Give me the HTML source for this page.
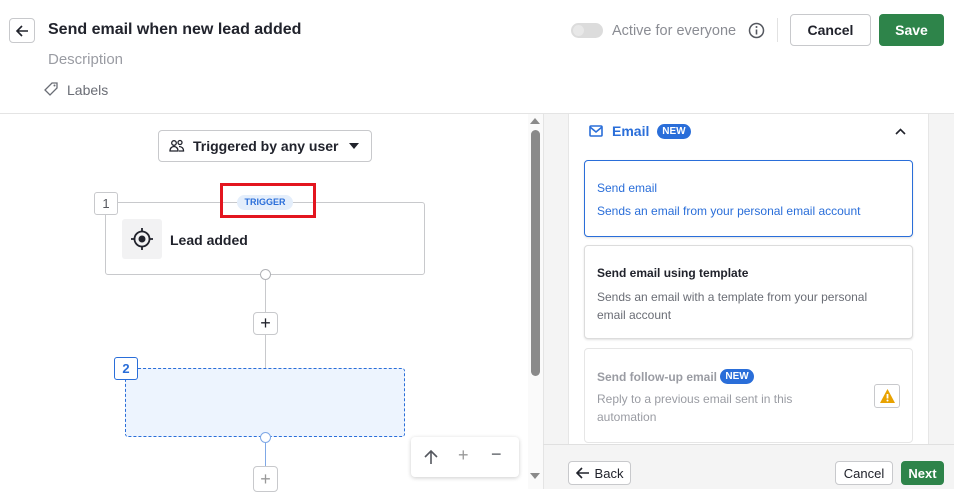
<!DOCTYPE html>
<html><head><style>
*{box-sizing:border-box;margin:0;padding:0}
body{width:954px;height:489px;overflow:hidden;background:#fff;font-family:"Liberation Sans",sans-serif;color:#21232c;position:relative}
.a{position:absolute}
.btn{position:absolute;border:1px solid #c8c9cc;border-radius:4px;background:#fff;display:flex;align-items:center;justify-content:center;font-weight:bold}
.card{position:absolute;left:584px;width:329px;background:#fff;border:1px solid #dcdcdc;border-radius:4px;box-shadow:0 1px 2px rgba(0,0,0,.12)}
.new{display:inline-block;background:#2a6ed9;color:#fff;font-size:10px;font-weight:bold;border-radius:9px;padding:2px 5px;vertical-align:2px}
</style></head><body>
<div class="btn" style="left:9px;top:18px;width:26px;height:25px;font-weight:normal">
<svg width="14" height="14" viewBox="0 0 14 14"><path d="M13 7H2M7 2L2 7l5 5" stroke="#21232c" stroke-width="1.6" fill="none"/></svg></div>
<div class="a" style="left:48px;top:21px;font-size:16px;font-weight:bold">Send email when new lead added</div>
<div class="a" style="left:48px;top:51px;font-size:15px;color:#9a9ca3">Description</div>
<svg class="a" style="left:43px;top:81px" width="16" height="16" viewBox="0 0 16 16"><path d="M9 2h5v5l-7 7-5-5z" stroke="#6a6d75" stroke-width="1.3" fill="none"/><circle cx="11.5" cy="4.5" r="1" fill="#6a6d75"/></svg>
<div class="a" style="left:67px;top:82px;font-size:14px;color:#6a6d75">Labels</div>
<div class="a" style="left:571px;top:23px;width:32px;height:15px;border-radius:8px;background:#dcdcdc"></div>
<div class="a" style="left:573px;top:25px;width:11px;height:11px;border-radius:6px;background:#e8e8e8"></div>
<div class="a" style="left:612px;top:23px;font-size:14.5px;color:#8a8c93">Active for everyone</div>
<svg class="a" style="left:748px;top:22px" width="17" height="17" viewBox="0 0 17 17"><circle cx="8.5" cy="8.5" r="7" stroke="#55585f" stroke-width="1.5" fill="none"/><path d="M8.5 7.5v5" stroke="#55585f" stroke-width="1.6"/><circle cx="8.5" cy="5" r="1" fill="#55585f"/></svg>
<div class="a" style="left:777px;top:18px;width:1px;height:24px;background:#e2e2e2"></div>
<div class="btn" style="left:790px;top:14px;width:81px;height:32px;font-size:14px">Cancel</div>
<div class="btn" style="left:879px;top:14px;width:65px;height:32px;font-size:14px;background:#2e844a;border-color:#2e844a;color:#fff">Save</div>
<div class="a" style="left:0;top:113px;width:954px;height:1px;background:#e4e4e4"></div>
<div class="btn" style="left:158px;top:130px;width:214px;height:32px;font-size:14px;justify-content:flex-start;padding-left:10px">
<svg width="16" height="14" viewBox="0 0 16 14" style="margin-right:8px"><circle cx="5" cy="4" r="2.3" stroke="#21232c" stroke-width="1.3" fill="none"/><circle cx="11" cy="3.5" r="2" stroke="#21232c" stroke-width="1.3" fill="none"/><path d="M1 12c0-3 2-4.5 4-4.5s4 1.5 4 4.5zM10 7.5c2.5 0 4.5 1.5 4.5 4.5H10" stroke="#21232c" stroke-width="1.3" fill="none"/></svg>Triggered by any user
<svg style="position:absolute;left:190px;top:12px" width="10" height="6"><path d="M0 0h10L5 6z" fill="#21232c"/></svg></div>
<div class="a" style="left:105px;top:202px;width:320px;height:73px;border:1px solid #c8c9cc;border-radius:3px;background:#fff"></div>
<div class="a" style="left:94px;top:192px;width:24px;height:23px;border:1px solid #c8c9cc;border-radius:3px;background:#fff;font-size:13px;text-align:center;line-height:21px;color:#55585f">1</div>
<div class="a" style="left:237px;top:195px;width:56px;height:15px;border-radius:8px;background:#e4eefb;color:#2a6ed9;font-size:9px;font-weight:bold;text-align:center;line-height:15px">TRIGGER</div>
<div class="a" style="left:220px;top:183px;width:96px;height:35px;border:3px solid #e3151f"></div>
<div class="a" style="left:122px;top:219px;width:40px;height:40px;background:#f2f2f3;border-radius:3px"></div>
<svg class="a" style="left:130px;top:227px" width="24" height="24" viewBox="0 0 24 24"><circle cx="12" cy="12" r="7.5" stroke="#21232c" stroke-width="1.8" fill="none"/><circle cx="12" cy="12" r="3.5" fill="#21232c"/><path d="M12 1v4M12 19v4M1 12h4M19 12h4" stroke="#21232c" stroke-width="1.8"/></svg>
<div class="a" style="left:170px;top:232px;font-size:14px;font-weight:bold">Lead added</div>
<div class="a" style="left:265px;top:275px;width:1px;height:40px;background:#c8c9cc"></div>
<div class="a" style="left:260px;top:269px;width:11px;height:11px;border:1px solid #b0b2b6;border-radius:50%;background:#fff"></div>
<div class="btn" style="left:253px;top:312px;width:25px;height:23px;font-size:18px;font-weight:normal">+</div>
<div class="a" style="left:265px;top:335px;width:1px;height:34px;background:#c8c9cc"></div>
<div class="a" style="left:125px;top:368px;width:280px;height:69px;border:1px dashed #2a6ed9;border-radius:3px;background:#edf4fe"></div>
<div class="a" style="left:114px;top:357px;width:24px;height:23px;border:1px solid #2a6ed9;border-radius:3px;background:#fff;font-size:13px;font-weight:bold;text-align:center;line-height:21px;color:#2a6ed9">2</div>
<div class="a" style="left:265px;top:437px;width:1px;height:30px;background:#7fa8e6"></div>
<div class="a" style="left:260px;top:432px;width:11px;height:11px;border:1px solid #7fa8e6;border-radius:50%;background:#fff"></div>
<div class="btn" style="left:253px;top:466px;width:25px;height:26px;font-size:18px;font-weight:normal;color:#999">+</div>
<div class="a" style="left:411px;top:437px;width:108px;height:40px;background:#fff;border-radius:4px;box-shadow:0 1px 4px rgba(0,0,0,.2);font-size:18px;color:#999">
<svg style="position:absolute;left:13px;top:12px" width="14" height="15"><path d="M7 15V2M1 8l6-6 6 6" stroke="#55585f" stroke-width="1.6" fill="none"/></svg>
<span style="position:absolute;left:47px;top:8px">+</span><span style="position:absolute;left:80px;top:7px;color:#55585f">−</span></div>
<div class="a" style="left:528px;top:114px;width:15px;height:375px;background:#fafafa"></div>
<div class="a" style="left:531px;top:130px;width:9px;height:246px;background:#8a8a8a;border-radius:5px"></div>
<svg class="a" style="left:530px;top:473px" width="10" height="6"><path d="M0 0h10L5 6z" fill="#8a8a8a"/></svg>
<svg class="a" style="left:530px;top:118px" width="10" height="6"><path d="M0 6h10L5 0z" fill="#8a8a8a"/></svg>
<div class="a" style="left:543px;top:114px;width:411px;height:375px;background:#f4f4f4;border-left:1px solid #e4e4e4"></div>
<div class="a" style="left:568px;top:114px;width:361px;height:330px;background:#fff;border-left:1px solid #e6e6e6;border-right:1px solid #e6e6e6"></div>
<svg class="a" style="left:589px;top:125px" width="14" height="12" viewBox="0 0 14 12"><rect x="1" y="1" width="12" height="10" rx="1" stroke="#2a6ed9" stroke-width="1.6" fill="none"/><path d="M1 2l6 5 6-5" stroke="#2a6ed9" stroke-width="1.6" fill="none"/></svg>
<div class="a" style="left:612px;top:123px;font-size:14px;font-weight:bold;color:#2a6ed9">Email <span class="new" style="margin-left:4px">NEW</span></div>
<svg class="a" style="left:895px;top:128px" width="11" height="7"><path d="M1 6l4.5-4.5L10 6" stroke="#21232c" stroke-width="1.6" fill="none"/></svg>
<div class="card" style="top:160px;height:77px;border-color:#2a6ed9">
<div class="a" style="left:12px;top:20px;font-size:12px;color:#2a6ed9">Send email</div>
<div class="a" style="left:12px;top:43px;font-size:12px;color:#2a6ed9">Sends an email from your personal email account</div></div>
<div class="card" style="top:245px;height:94px">
<div class="a" style="left:12px;top:20px;font-size:12px;font-weight:bold">Send email using template</div>
<div class="a" style="left:12px;top:42px;font-size:12px;color:#6a6d75;line-height:18px;width:300px">Sends an email with a template from your personal email account</div></div>
<div class="card" style="top:348px;height:95px;box-shadow:none;border-color:#e6e6e6">
<div class="a" style="left:12px;top:20px;font-size:12px;font-weight:bold;color:#9a9ca3">Send follow-up email <span class="new">NEW</span></div>
<div class="a" style="left:12px;top:41px;font-size:12px;color:#9a9ca3;line-height:18px;width:220px">Reply to a previous email sent in this automation</div>
<div class="a" style="left:289px;top:35px;width:26px;height:24px;border:1px solid #c8c9cc;border-radius:3px;background:#fff">
<svg style="position:absolute;left:4px;top:3px" width="17" height="16" viewBox="0 0 17 16"><path d="M8.5 1L16 15H1z" fill="#e8a200"/><path d="M8.5 6v4.5" stroke="#fff" stroke-width="1.8"/><circle cx="8.5" cy="12.5" r="1" fill="#fff"/></svg></div></div>
<div class="a" style="left:543px;top:444px;width:411px;height:1px;background:#e0e0e0"></div>
<div class="btn" style="left:568px;top:461px;width:63px;height:24px;font-size:13px;font-weight:normal">
<svg width="14" height="12" viewBox="0 0 14 12" style="margin-right:5px"><path d="M13 6H2M6 1L1 6l5 5" stroke="#21232c" stroke-width="1.6" fill="none"/></svg>Back</div>
<div class="btn" style="left:835px;top:461px;width:58px;height:24px;font-size:13px;font-weight:normal">Cancel</div>
<div class="btn" style="left:901px;top:461px;width:43px;height:24px;font-size:13px;background:#2e844a;border-color:#2e844a;color:#fff">Next</div>
</body></html>
